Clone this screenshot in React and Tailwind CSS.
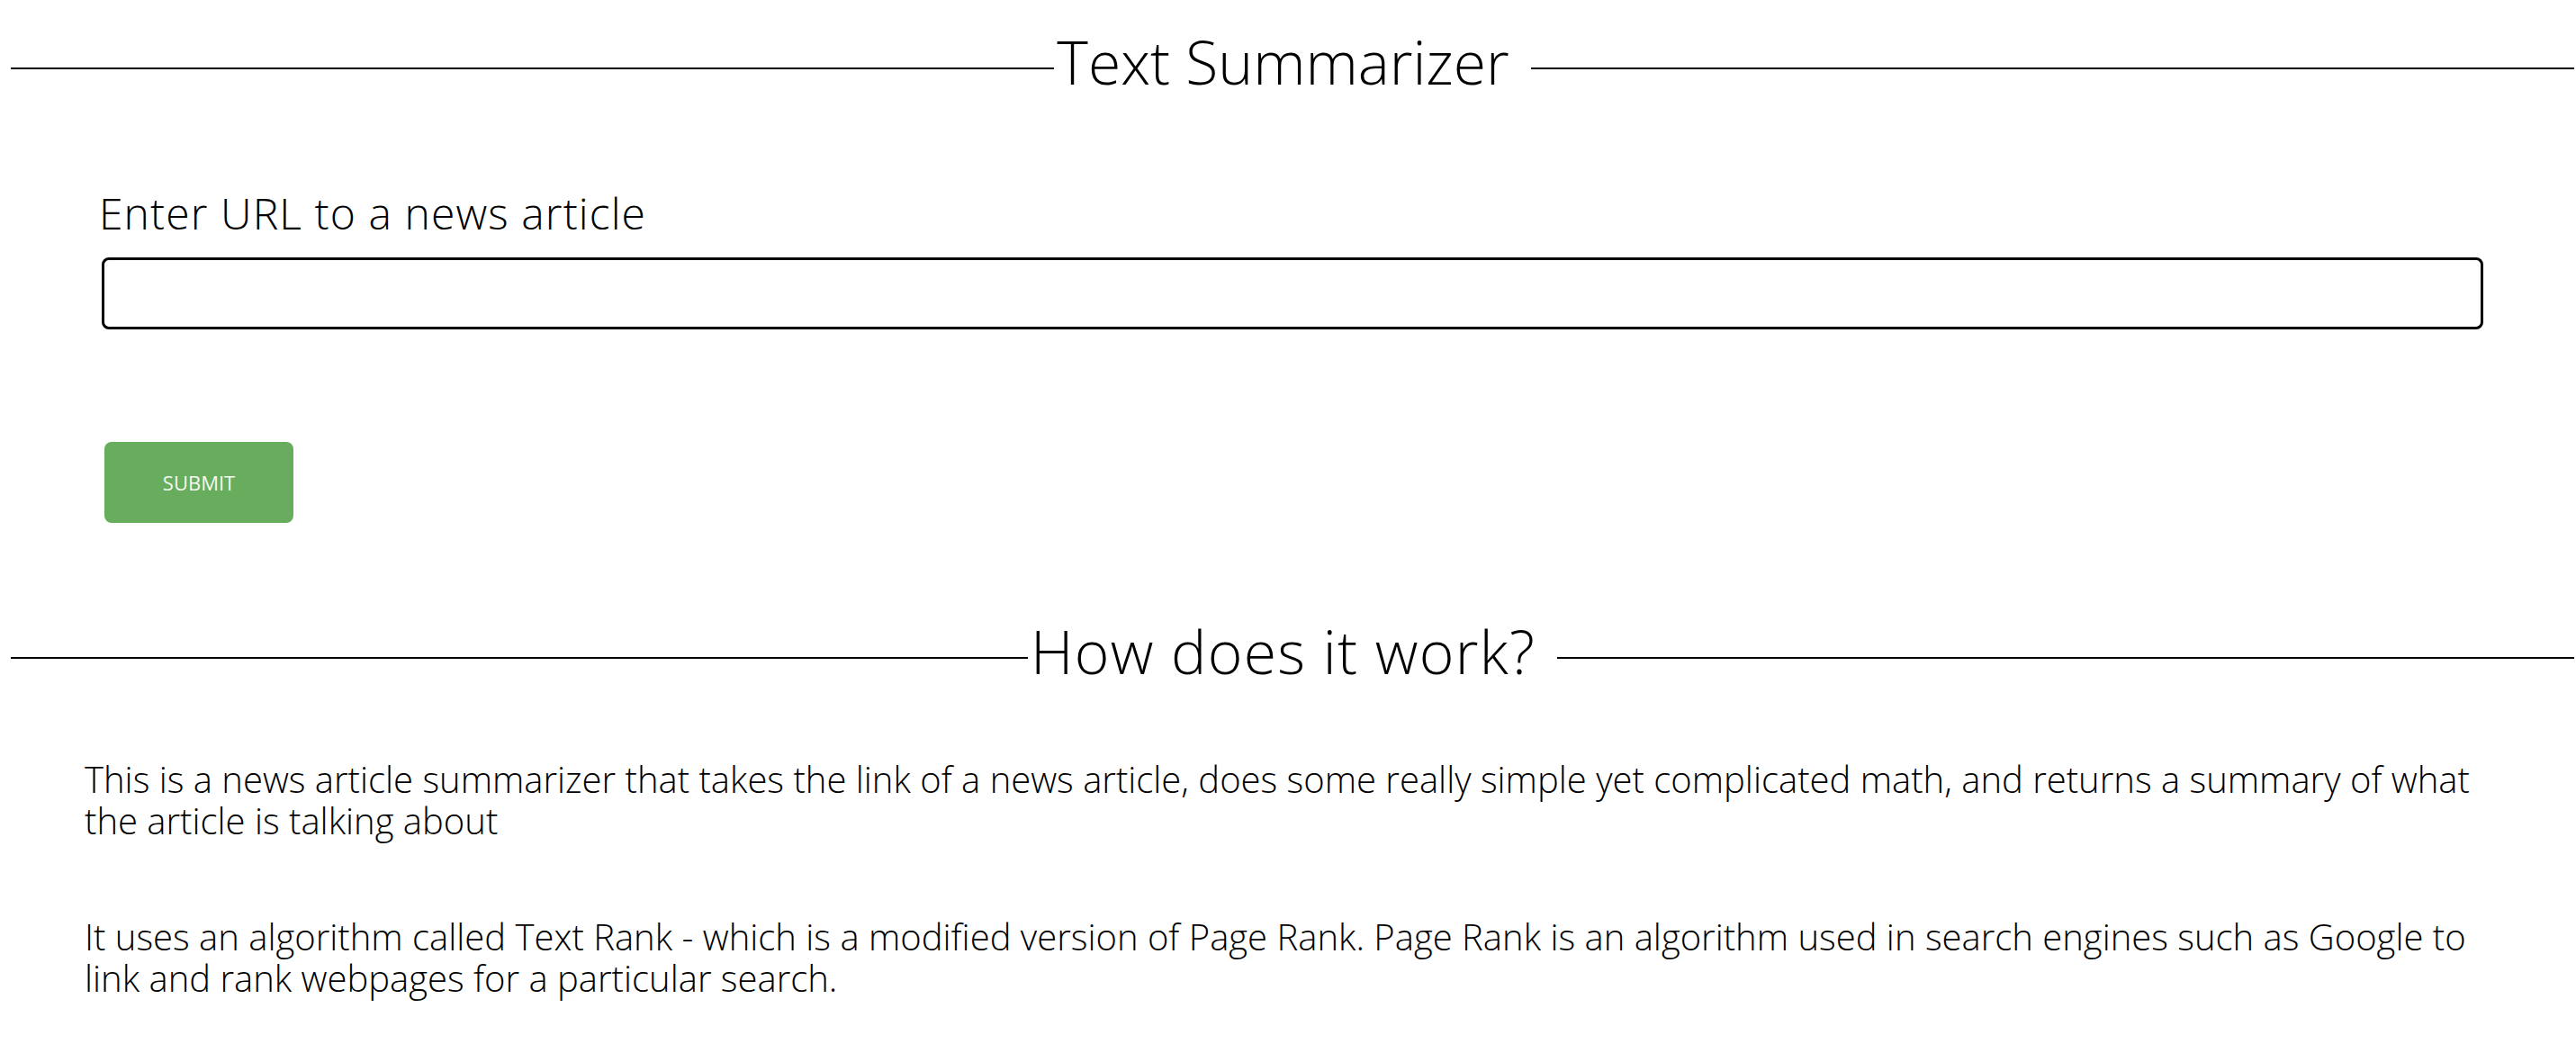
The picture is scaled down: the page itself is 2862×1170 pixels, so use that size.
import React from "react";

function SectionTitle({ children, className = "", gap = "mr-[24px]" }) {
  return (
    <div className={`flex items-center h-[90px] pl-[12px] pr-[2px] ${className}`}>
      <div className="flex-1 h-[2px] bg-black mt-[16px]" />
      <h2 className={`ml-[3px] ${gap} text-[66px] leading-[90px] font-light text-black whitespace-nowrap`}>
        {children}
      </h2>
      <div className="flex-1 h-[2px] bg-black mt-[16px]" />
    </div>
  );
}

export default function App() {
  return (
    <div className="min-h-screen bg-white text-black pt-[23px] pb-[40px] font-['Open_Sans',sans-serif] font-light">
      <SectionTitle>Text Summarizer</SectionTitle>

      <div className="mt-[92px] pl-[113px] pr-[103px]">
        <label className="block -ml-[3px] text-[48px] leading-[63px] tracking-[1.1px] font-light">
          Enter URL to a news article
        </label>
        <input
          type="text"
          className="mt-[18px] block w-full h-[80px] border-[3px] border-black rounded-[8px] bg-white px-4 text-[30px] outline-none"
        />
        <button
          type="button"
          className="mt-[125px] ml-[3px] flex items-center justify-center w-[210px] h-[90px] rounded-[8px] bg-[#67ad5d] text-[22px] font-normal uppercase text-[#f4f8f3]"
        >
          Submit
        </button>
      </div>

      <SectionTitle className="mt-[97px]">
        <span className="tracking-[1.3px]">How does it work?</span>
      </SectionTitle>

      <p className="mt-[75px] pl-[94px] pr-[93px] text-[40px] leading-[46px] font-light">
        This is a news article summarizer that takes the link of a news article, does some really simple yet complicated math, and returns a summary of what the article is talking about
      </p>
      <p className="mt-[83px] pl-[94px] pr-[93px] text-[40px] leading-[46px] font-light">
        It uses an algorithm called Text Rank - which is a modified version of Page Rank. Page Rank is an algorithm used in search engines such as Google to link and rank webpages for a particular search.
      </p>
    </div>
  );
}
